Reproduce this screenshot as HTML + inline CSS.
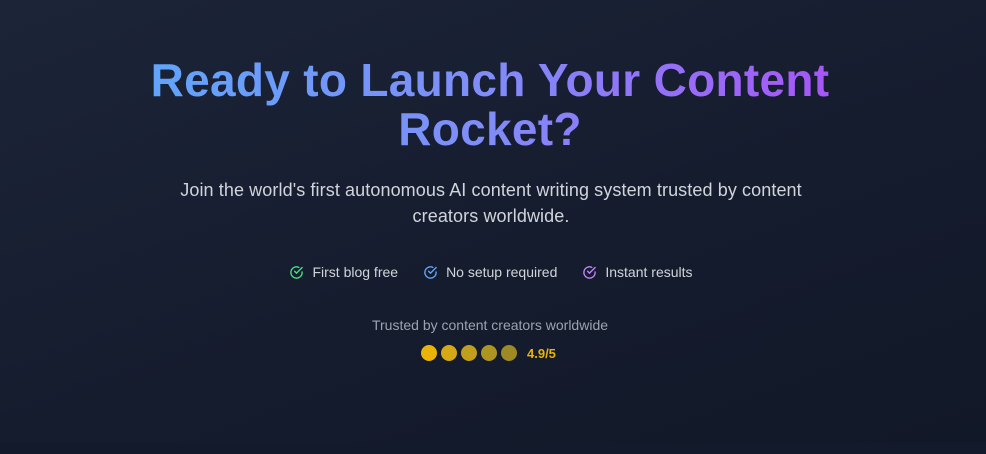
<!DOCTYPE html>
<html><head><style>
html,body{margin:0;padding:0;}
body{width:986px;height:454px;overflow:hidden;background:linear-gradient(160deg,#1c2438 0%,#151c2e 55%,#111827 100%);font-family:"Liberation Sans",sans-serif;position:relative;}
h1{position:absolute;left:0;right:6px;top:56px;margin:0;text-align:center;font-size:46px;line-height:49px;font-weight:bold;letter-spacing:0.3px;}
h1 span{background:linear-gradient(90deg,#60a5fa 0%,#818cf8 50%,#a855f7 100%);-webkit-background-clip:text;background-clip:text;color:transparent;display:inline-block;width:700px;}
p.sub{position:absolute;left:0;right:4px;top:177px;margin:0;text-align:center;font-size:18px;line-height:26px;color:#d1d5db;letter-spacing:0.1px;}
.badges{position:absolute;top:264px;left:0;right:4px;display:flex;justify-content:center;gap:25px;font-size:14px;color:#d1d5db;}
.badges div{display:flex;align-items:center;gap:8px;}
.trust{position:absolute;top:317px;left:0;right:6px;text-align:center;font-size:14px;color:#9ca3af;}
.rating{position:absolute;top:345px;left:421px;display:flex;align-items:center;gap:4px;}
.rating i{width:16px;height:16px;border-radius:50%;display:block;}
.rating b{color:#eab308;font-size:13px;margin-left:6px;}
.strip{position:absolute;left:0;right:0;top:443px;height:11px;background:#121a2b;}
</style></head><body>
<h1><span>Ready to Launch Your Content Rocket?</span></h1>
<p class="sub">Join the world's first autonomous AI content writing system trusted by content<br>creators worldwide.</p>
<div class="badges">
<div><svg width="15" height="15" viewBox="0 0 24 24" fill="none" stroke="#4ade80" stroke-width="2.2" stroke-linecap="round"><path d="M21 11.1V12a9 9 0 1 1-5.3-8.2"/><path d="M21 4 12 13l-3-3"/></svg>First blog free</div>
<div><svg width="15" height="15" viewBox="0 0 24 24" fill="none" stroke="#60a5fa" stroke-width="2.2" stroke-linecap="round"><path d="M21 11.1V12a9 9 0 1 1-5.3-8.2"/><path d="M21 4 12 13l-3-3"/></svg>No setup required</div>
<div><svg width="15" height="15" viewBox="0 0 24 24" fill="none" stroke="#c084fc" stroke-width="2.2" stroke-linecap="round"><path d="M21 11.1V12a9 9 0 1 1-5.3-8.2"/><path d="M21 4 12 13l-3-3"/></svg>Instant results</div>
</div>
<div class="trust">Trusted by content creators worldwide</div>
<div class="rating"><i style="background:#eab308"></i><i style="background:#d4a915"></i><i style="background:#c19e1b"></i><i style="background:#ae9420"></i><i style="background:#9e8a24"></i><b>4.9/5</b></div>
<div class="strip"></div>
</body></html>
